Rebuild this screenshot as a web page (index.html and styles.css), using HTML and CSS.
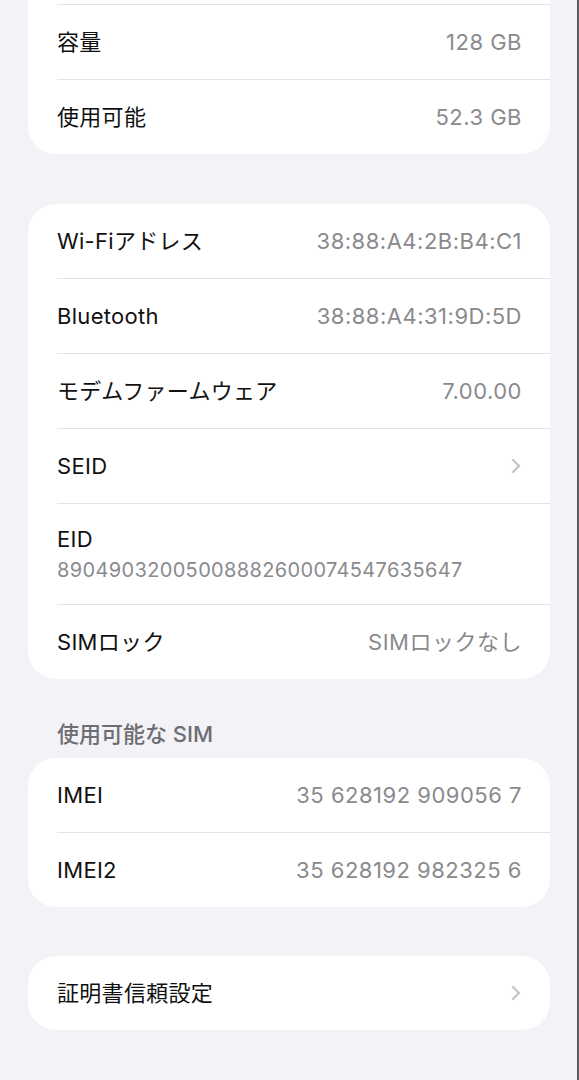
FILE: index.html
```html
<!DOCTYPE html>
<html lang="ja">
<head>
    <meta charset="UTF-8">
    <meta name="viewport" content="width=device-width, initial-scale=1.0">
    <title>情報</title>
    <link rel="stylesheet" href="styles.css">
</head>
<body>
    <div class="screen">

        <div class="card cut">
            <div class="row">
                <div class="row-inner">
                    <span class="label">容量</span>
                    <span class="value">128 GB</span>
                </div>
            </div>
            <div class="row">
                <div class="row-inner">
                    <span class="label">使用可能</span>
                    <span class="value">52.3 GB</span>
                </div>
            </div>
        </div>

        <div class="card">
            <div class="row">
                <div class="row-inner">
                    <span class="label">Wi-Fiアドレス</span>
                    <span class="value">38:88:A4:2B:B4:C1</span>
                </div>
            </div>
            <div class="row">
                <div class="row-inner">
                    <span class="label">Bluetooth</span>
                    <span class="value">38:88:A4:31:9D:5D</span>
                </div>
            </div>
            <div class="row">
                <div class="row-inner">
                    <span class="label">モデムファームウェア</span>
                    <span class="value">7.00.00</span>
                </div>
            </div>
            <div class="row">
                <div class="row-inner">
                    <span class="label">SEID</span>
                    <svg class="chevron" width="10" height="16" viewBox="0 0 10 16">
                        <path d="M2 2 L8 8 L2 14" fill="none" stroke="#c4c4c8" stroke-width="2.2" stroke-linecap="round" stroke-linejoin="round"/>
                    </svg>
                </div>
            </div>
            <div class="row">
                <div class="row-inner stacked">
                    <span class="label">EID</span>
                    <span class="sub">89049032005008882600074547635647</span>
                </div>
            </div>
            <div class="row">
                <div class="row-inner">
                    <span class="label">SIMロック</span>
                    <span class="value">SIMロックなし</span>
                </div>
            </div>
        </div>

        <div class="section-title">使用可能な SIM</div>
        <div class="card tight">
            <div class="row">
                <div class="row-inner">
                    <span class="label">IMEI</span>
                    <span class="value">35 628192 909056 7</span>
                </div>
            </div>
            <div class="row">
                <div class="row-inner">
                    <span class="label">IMEI2</span>
                    <span class="value">35 628192 982325 6</span>
                </div>
            </div>
        </div>

        <div class="card">
            <div class="row">
                <div class="row-inner">
                    <span class="label">証明書信頼設定</span>
                    <svg class="chevron" width="10" height="16" viewBox="0 0 10 16">
                        <path d="M2 2 L8 8 L2 14" fill="none" stroke="#c4c4c8" stroke-width="2.2" stroke-linecap="round" stroke-linejoin="round"/>
                    </svg>
                </div>
            </div>
        </div>

    </div>
</body>
</html>
```

FILE: styles.css
```css
html, body {
    margin: 0;
    height: 100%;
}
body {
    background-color: #f2f2f7;
    font-family: Inter, "Noto Sans CJK JP", sans-serif;
    font-size: 22px;
    color: #111;
    overflow: hidden;
}
.screen {
    height: 100%;
    box-sizing: border-box;
    padding: 0 27px 0 28px;
    border-right: 2px solid #5a5a5e;
    display: flex;
    flex-direction: column;
}
.card {
    background-color: #fff;
    border-radius: 28px;
    margin-bottom: 50px;
}
.card.cut {
    border-top-left-radius: 0;
    border-top-right-radius: 0;
    padding-top: 4px;
}
.card.tight {
    margin-bottom: 49px;
}
.row {
    padding-left: 29px;
}
.row + .row .row-inner,
.card.cut .row:first-child .row-inner {
    border-top: 1px solid #e2e2e6;
}
.row-inner {
    height: 74px;
    padding-right: 28px;
    display: flex;
    align-items: center;
    justify-content: space-between;
}
.row-inner.stacked {
    height: auto;
    padding-top: 22px;
    padding-bottom: 22px;
    flex-direction: column;
    align-items: flex-start;
    justify-content: flex-start;
}
.label {
    line-height: 26px;
    letter-spacing: 0.3px;
}
.value {
    color: #8a8a8e;
    line-height: 26px;
    letter-spacing: 0.5px;
}
.sub {
    color: #8a8a8e;
    font-size: 20px;
    line-height: 24px;
    letter-spacing: 0.35px;
    margin-top: 6px;
}
.chevron {
    margin-right: 1px;
}
.section-title {
    color: #6d6d72;
    font-size: 22px;
    font-weight: 500;
    line-height: 24px;
    padding-left: 29px;
    margin-top: -7px;
    margin-bottom: 12px;
}
```
